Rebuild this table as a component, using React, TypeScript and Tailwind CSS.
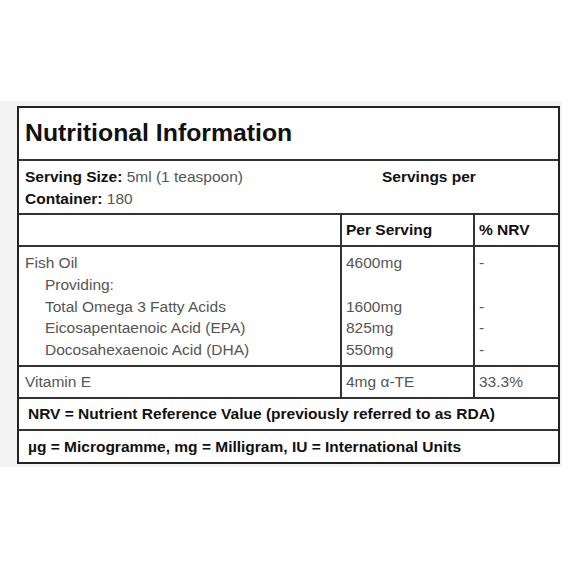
import React from "react";

const font = { fontFamily: '"Liberation Sans", Arial, sans-serif' };

export default function App() {
  return (
    <div className="w-[570px] h-[570px] bg-white pt-[101px]" style={font}>
      <div className="w-[562px] bg-[#f3f3f3] pl-[17px] pr-[2px] pt-[5px] pb-[3px]">
        <div className="bg-white border-2 border-[#222] text-[15.5px] leading-[21.5px] text-[#555]">
          {/* Title */}
          <div className="h-[53px] border-b-2 border-[#333] flex items-center px-[6px]">
            <h1 className="text-[24.8px] font-bold text-[#111] leading-none">Nutritional Information</h1>
          </div>
          {/* Serving */}
          <div className="h-[54px] border-b-2 border-[#333] px-[6px] pt-[5px]">
            <div className="flex">
              <div className="w-[357px]">
                <span className="font-bold text-[#111]">Serving Size:</span> 5ml (1 teaspoon)
              </div>
              <div className="font-bold text-[#111]">Servings per</div>
            </div>
            <div>
              <span className="font-bold text-[#111]">Container:</span> 180
            </div>
          </div>
          {/* Header */}
          <div className="grid grid-cols-[323px_133px_1fr] h-[32px] border-b-2 border-[#333]">
            <div className="border-r-2 border-[#333]"></div>
            <div className="border-r-2 border-[#333] flex items-center px-[4px] font-bold text-[#111]">Per Serving</div>
            <div className="flex items-center px-[4px] font-bold text-[#111]">% NRV</div>
          </div>
          {/* Fish oil */}
          <div className="grid grid-cols-[323px_133px_1fr] h-[120px] border-b-2 border-[#333] leading-[21.8px]">
            <div className="border-r-2 border-[#333] px-[6px] pt-[5px]">
              <div>Fish Oil</div>
              <div className="pl-[20px]">Providing:</div>
              <div className="pl-[20px]">Total Omega 3 Fatty Acids</div>
              <div className="pl-[20px]">Eicosapentaenoic Acid (EPA)</div>
              <div className="pl-[20px]">Docosahexaenoic Acid (DHA)</div>
            </div>
            <div className="border-r-2 border-[#333] px-[4px] pt-[5px]">
              <div>4600mg</div>
              <div>&nbsp;</div>
              <div>1600mg</div>
              <div>825mg</div>
              <div>550mg</div>
            </div>
            <div className="px-[4px] pt-[5px]">
              <div>-</div>
              <div>&nbsp;</div>
              <div>-</div>
              <div>-</div>
              <div>-</div>
            </div>
          </div>
          {/* Vitamin E */}
          <div className="grid grid-cols-[323px_133px_1fr] h-[32px] border-b-2 border-[#333]">
            <div className="border-r-2 border-[#333] flex items-center px-[6px]">Vitamin E</div>
            <div className="border-r-2 border-[#333] flex items-center px-[4px]">4mg α-TE</div>
            <div className="flex items-center px-[4px]">33.3%</div>
          </div>
          {/* NRV */}
          <div className="h-[32px] border-b-2 border-[#333] flex items-center px-[9px] font-bold text-[#111]">
            NRV = Nutrient Reference Value (previously referred to as RDA)
          </div>
          {/* units */}
          <div className="h-[31px] flex items-center px-[9px] font-bold text-[#111]">
            µg = Microgramme, mg = Milligram, IU = International Units
          </div>
        </div>
      </div>
    </div>
  );
}
